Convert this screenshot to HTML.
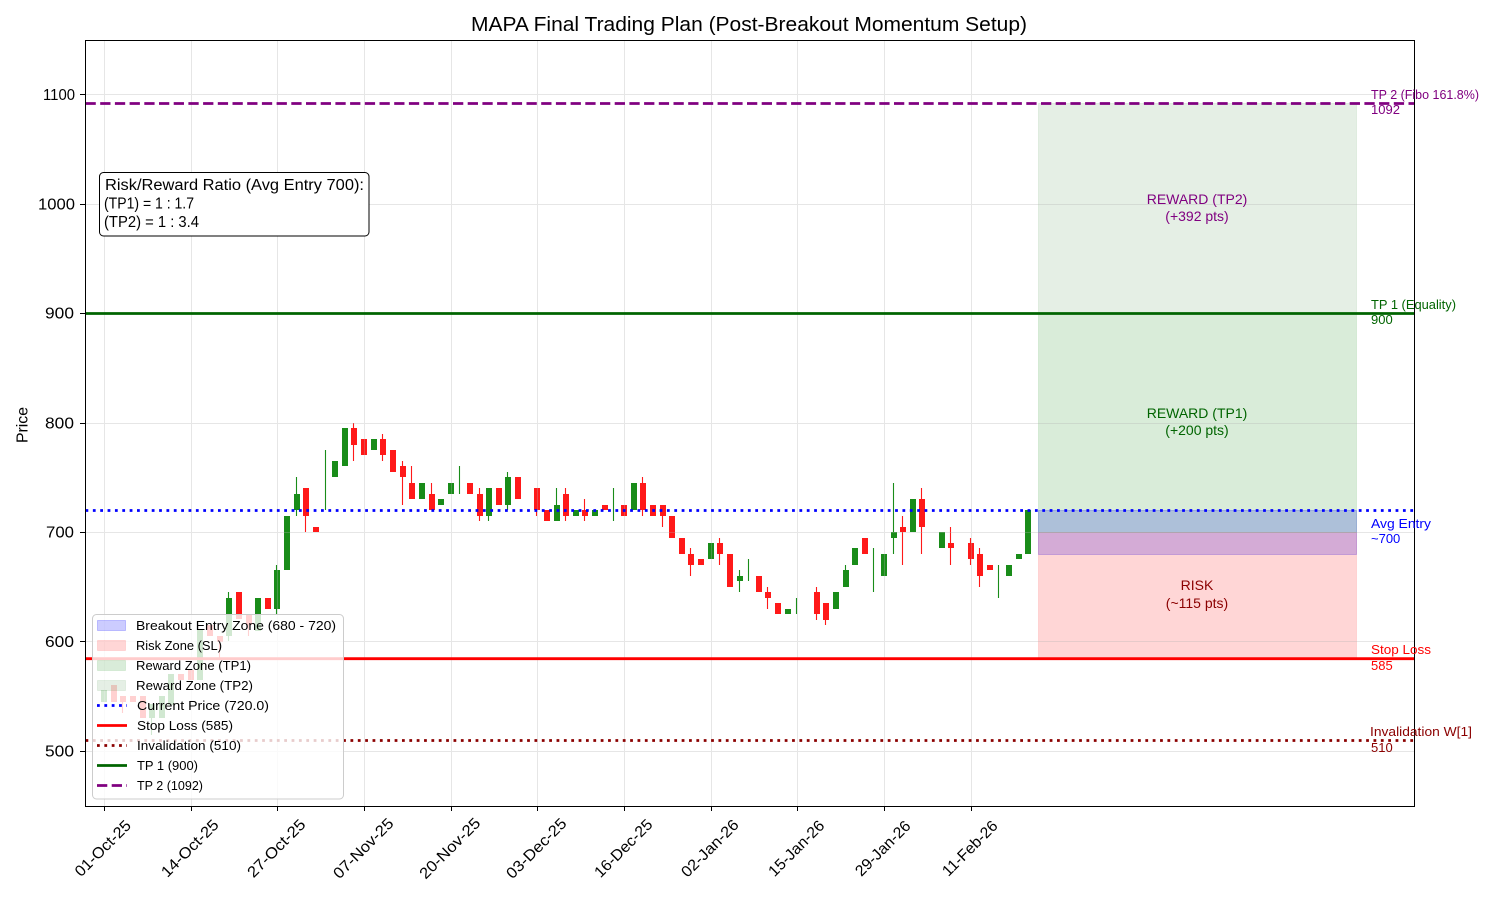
<!DOCTYPE html>
<html><head><meta charset="utf-8"><title>MAPA Final Trading Plan</title>
<style>html,body{margin:0;padding:0;background:#fff}svg{display:block}text{font-family:"Liberation Sans",sans-serif}</style></head>
<body>
<svg width="1500" height="900" viewBox="0 0 1500 900" xmlns="http://www.w3.org/2000/svg">
<rect width="1500" height="900" fill="#fff"/>
<!-- zones -->
<rect x="1038.5" y="510.5" width="318" height="44" fill="#0000ff" fill-opacity=".2" stroke="#0000ff" stroke-opacity=".2"/>
<rect x="1038.5" y="532.5" width="318" height="126" fill="#ff0000" fill-opacity=".16" stroke="#ff0000" stroke-opacity=".1"/>
<rect x="1038.5" y="313.5" width="318" height="219" fill="#008000" fill-opacity=".15" stroke="#008000" stroke-opacity=".1"/>
<rect x="1038.5" y="103.5" width="318" height="210" fill="#006400" fill-opacity=".1" stroke="#006400" stroke-opacity=".08"/>
<!-- candles -->
<g fill="none">
<path transform="translate(-.5 0)" stroke="#198c19" stroke-width="1.1" d="M152 704V735M229 592V641M277 565V614M297 477V516M326 450V510M460 466V494M489 488V521M508 472V510M557 488V521M614 488V521M740 570V592M749 559V581M797 598V614M846 565V587M874 548V592M894 483V554M999 565V598"/>
<path stroke="#198c19" stroke-width="6" d="M104 690V702M152 704V718M162 696V718M171 674V705M200 630V680M229 598V636M258 598V631M277 570V609M287 516V570M297 494V510M335 461V477M345 428V466M374 439V450M422 483V499M441 499V505M451 483V494M489 488V516M508 477V505M557 505V521M576 510V516M595 510V516M634 483V510M711 543V559M740 576V581M788 609V614M836 592V609M846 570V587M855 548V565M884 554V576M894 532V538M913 499V532M942 532V548M1009 565V576M1019 554V559M1028 510V554"/>
<path transform="translate(-.5 0)" stroke="#ff1919" stroke-width="1.1" d="M123 702V713M220 642V660M249 625V636M306 516V532M354 423V461M383 434V461M403 461V505M412 466V483M432 483V494M480 488V521M537 510V516M566 488V521M585 499V521M643 477V516M663 516V527M691 548V576M720 538V565M768 587V609M817 587V620M826 620V625M903 516V565M922 488V554M951 527V565M971 538V565M980 548V587"/>
<path stroke="#ff1919" stroke-width="6" d="M114 685V702M123 696V702M133 696V702M143 696V718M181 674V680M191 670V680M210 625V636M220 636V642M239 592V619M249 614V625M268 598V609M306 488V516M316 527V532M354 428V445M364 439V455M383 439V455M393 450V472M403 466V477M412 483V499M432 494V510M470 483V494M480 494V516M499 488V505M518 477V499M537 488V510M547 510V521M566 494V516M585 510V516M605 505V510M624 505V516M643 483V510M653 505V516M663 505V516M672 516V538M682 538V554M691 554V565M701 559V565M720 543V554M730 554V587M759 576V592M768 592V598M778 603V614M817 592V614M826 603V620M865 538V554M903 527V532M922 499V527M951 543V548M971 543V559M980 554V576M990 565V570"/>
</g>
<!-- grid -->
<path fill="none" stroke="#b0b0b0" stroke-opacity=".32" stroke-width="1" d="M104.5 41V806M191.5 41V806M277.5 41V806M364.5 41V806M451.5 41V806M537.5 41V806M624.5 41V806M711.5 41V806M797.5 41V806M884.5 41V806M971.5 41V806M86 94.5H1414M86 204.5H1414M86 313.5H1414M86 423.5H1414M86 532.5H1414M86 641.5H1414M86 751.5H1414"/>
<!-- horizontal levels -->
<g fill="none" stroke-width="2.78">
<line x1="85.5" x2="1414.5" y1="510.5" y2="510.5" stroke="#0000ff" stroke-dasharray="2.78 4.58"/>
<line x1="85.5" x2="1414.5" y1="658.7" y2="658.7" stroke="#ff0000"/>
<line x1="85.5" x2="1414.5" y1="740.5" y2="740.5" stroke="#8b0000" stroke-dasharray="2.78 4.58"/>
<line x1="85.5" x2="1414.5" y1="313.5" y2="313.5" stroke="#006400"/>
<line x1="85.5" x2="1414.5" y1="103.5" y2="103.5" stroke="#800080" stroke-dasharray="10.28 4.42"/>
</g>
<!-- axes -->
<rect x="85.5" y="40.5" width="1329" height="766" fill="none" stroke="#000" stroke-width="1"/>
<path fill="none" stroke="#000" stroke-width="1" d="M104.5 807V811M191.5 807V811M277.5 807V811M364.5 807V811M451.5 807V811M537.5 807V811M624.5 807V811M711.5 807V811M797.5 807V811M884.5 807V811M971.5 807V811M80 94.5H85M80 204.5H85M80 313.5H85M80 423.5H85M80 532.5H85M80 641.5H85M80 751.5H85"/>
<!-- title -->
<text x="471" y="31" font-size="20" textLength="556" lengthAdjust="spacingAndGlyphs" fill="#000">MAPA Final Trading Plan (Post-Breakout Momentum Setup)</text>
<!-- y labels -->
<g font-size="16" fill="#000">
<text x="43" y="100" textLength="32" lengthAdjust="spacingAndGlyphs">1100</text>
<text x="38" y="209.500" textLength="37" lengthAdjust="spacingAndGlyphs">1000</text>
<text x="45" y="318.500" textLength="29" lengthAdjust="spacingAndGlyphs">900</text>
<text x="45" y="428.700" textLength="29" lengthAdjust="spacingAndGlyphs">800</text>
<text x="46" y="537.700" textLength="28" lengthAdjust="spacingAndGlyphs">700</text>
<text x="45" y="647" textLength="29" lengthAdjust="spacingAndGlyphs">600</text>
<text x="45" y="756.500" textLength="29" lengthAdjust="spacingAndGlyphs">500</text>
</g>
<text transform="translate(27.500,443) rotate(-90)" font-size="16" textLength="36" lengthAdjust="spacingAndGlyphs" fill="#000">Price</text>
<!-- x labels -->
<g font-size="15.5" text-anchor="middle" fill="#000">
<text transform="translate(106.500,852) rotate(-45)" textLength="72" lengthAdjust="spacingAndGlyphs">01-Oct-25</text>
<text transform="translate(193.500,852) rotate(-45)" textLength="74" lengthAdjust="spacingAndGlyphs">14-Oct-25</text>
<text transform="translate(280,852) rotate(-45)" textLength="75" lengthAdjust="spacingAndGlyphs">27-Oct-25</text>
<text transform="translate(367,852) rotate(-45)" textLength="78" lengthAdjust="spacingAndGlyphs">07-Nov-25</text>
<text transform="translate(453.500,852) rotate(-45)" textLength="79" lengthAdjust="spacingAndGlyphs">20-Nov-25</text>
<text transform="translate(540,852) rotate(-45)" textLength="78" lengthAdjust="spacingAndGlyphs">03-Dec-25</text>
<text transform="translate(627,852) rotate(-45)" textLength="75" lengthAdjust="spacingAndGlyphs">16-Dec-25</text>
<text transform="translate(713.500,852) rotate(-45)" textLength="74" lengthAdjust="spacingAndGlyphs">02-Jan-26</text>
<text transform="translate(800,852) rotate(-45)" textLength="72" lengthAdjust="spacingAndGlyphs">15-Jan-26</text>
<text transform="translate(886.500,852) rotate(-45)" textLength="71" lengthAdjust="spacingAndGlyphs">29-Jan-26</text>
<text transform="translate(973.500,852) rotate(-45)" textLength="71" lengthAdjust="spacingAndGlyphs">11-Feb-26</text>
</g>
<!-- zone labels -->
<g font-size="14" text-anchor="middle">
<text x="1197" y="204" fill="#800080">REWARD (TP2)</text><text x="1197" y="221" fill="#800080">(+392 pts)</text>
<text x="1197" y="418" fill="#006400">REWARD (TP1)</text><text x="1197" y="435" fill="#006400">(+200 pts)</text>
<text x="1197" y="590" fill="#8b0000">RISK</text><text x="1197" y="608" fill="#8b0000">(~115 pts)</text>
</g>
<!-- right labels -->
<g font-size="13">
<text x="1371" y="99" fill="#800080" textLength="108" lengthAdjust="spacingAndGlyphs">TP 2 (Fibo 161.8%)</text><text x="1371" y="114" fill="#800080">1092</text>
<text x="1371" y="309" fill="#006400" textLength="85" lengthAdjust="spacingAndGlyphs">TP 1 (Equality)</text><text x="1371" y="324" fill="#006400">900</text>
<text x="1371" y="528" fill="#0000ff" textLength="60" lengthAdjust="spacingAndGlyphs">Avg Entry</text><text x="1371" y="543" fill="#0000ff">~700</text>
<text x="1371" y="654" fill="#ff0000" textLength="60" lengthAdjust="spacingAndGlyphs">Stop Loss</text><text x="1371" y="670" fill="#ff0000">585</text>
<text x="1370" y="736" fill="#8b0000" textLength="102" lengthAdjust="spacingAndGlyphs">Invalidation W[1]</text><text x="1371" y="752" fill="#8b0000">510</text>
</g>
<!-- ratio box -->
<rect x="99.5" y="172.5" width="269.5" height="63.5" rx="4" fill="#fff" stroke="#000" stroke-width="1"/>
<g font-size="15.5" fill="#000">
<text x="105" y="190" textLength="259" lengthAdjust="spacingAndGlyphs">Risk/Reward Ratio (Avg Entry 700):</text>
<text x="104" y="208.500" textLength="90" lengthAdjust="spacingAndGlyphs">(TP1) = 1 : 1.7</text>
<text x="104" y="227" textLength="95" lengthAdjust="spacingAndGlyphs">(TP2) = 1 : 3.4</text>
</g>
<!-- legend -->
<rect x="92.500" y="614.5" width="251" height="184.5" rx="4" fill="#fff" fill-opacity=".8" stroke="#ccc" stroke-width="1"/>
<rect x="97.5" y="620.5" width="28" height="10" fill="#0000ff" fill-opacity=".2" stroke="#0000ff" stroke-opacity=".2"/>
<rect x="97.5" y="640.5" width="28" height="10" fill="#ff0000" fill-opacity=".16" stroke="#ff0000" stroke-opacity=".1"/>
<rect x="97.5" y="660.5" width="28" height="10" fill="#008000" fill-opacity=".15" stroke="#008000" stroke-opacity=".1"/>
<rect x="97.5" y="680.5" width="28" height="10" fill="#006400" fill-opacity=".1" stroke="#006400" stroke-opacity=".08"/>
<g fill="none" stroke-width="2.78">
<line x1="97" x2="127" y1="705.5" y2="705.5" stroke="#0000ff" stroke-dasharray="2.78 4.58"/>
<line x1="97" x2="127" y1="725.5" y2="725.5" stroke="#ff0000"/>
<line x1="97" x2="127" y1="745.5" y2="745.5" stroke="#8b0000" stroke-dasharray="2.78 4.58"/>
<line x1="97" x2="127" y1="765.5" y2="765.5" stroke="#006400"/>
<line x1="97" x2="127" y1="785.5" y2="785.5" stroke="#800080" stroke-dasharray="10.28 4.42"/>
</g>
<g font-size="13" fill="#000">
<text x="136" y="630" textLength="200" lengthAdjust="spacingAndGlyphs">Breakout Entry Zone (680 - 720)</text>
<text x="136" y="650" textLength="86" lengthAdjust="spacingAndGlyphs">Risk Zone (SL)</text>
<text x="136" y="670" textLength="115" lengthAdjust="spacingAndGlyphs">Reward Zone (TP1)</text>
<text x="136" y="690" textLength="117" lengthAdjust="spacingAndGlyphs">Reward Zone (TP2)</text>
<text x="137" y="710" textLength="132" lengthAdjust="spacingAndGlyphs">Current Price (720.0)</text>
<text x="137" y="730" textLength="96" lengthAdjust="spacingAndGlyphs">Stop Loss (585)</text>
<text x="137" y="750" textLength="104" lengthAdjust="spacingAndGlyphs">Invalidation (510)</text>
<text x="137" y="770" textLength="61" lengthAdjust="spacingAndGlyphs">TP 1 (900)</text>
<text x="137" y="790" textLength="66" lengthAdjust="spacingAndGlyphs">TP 2 (1092)</text>
</g>
</svg>
</body></html>
